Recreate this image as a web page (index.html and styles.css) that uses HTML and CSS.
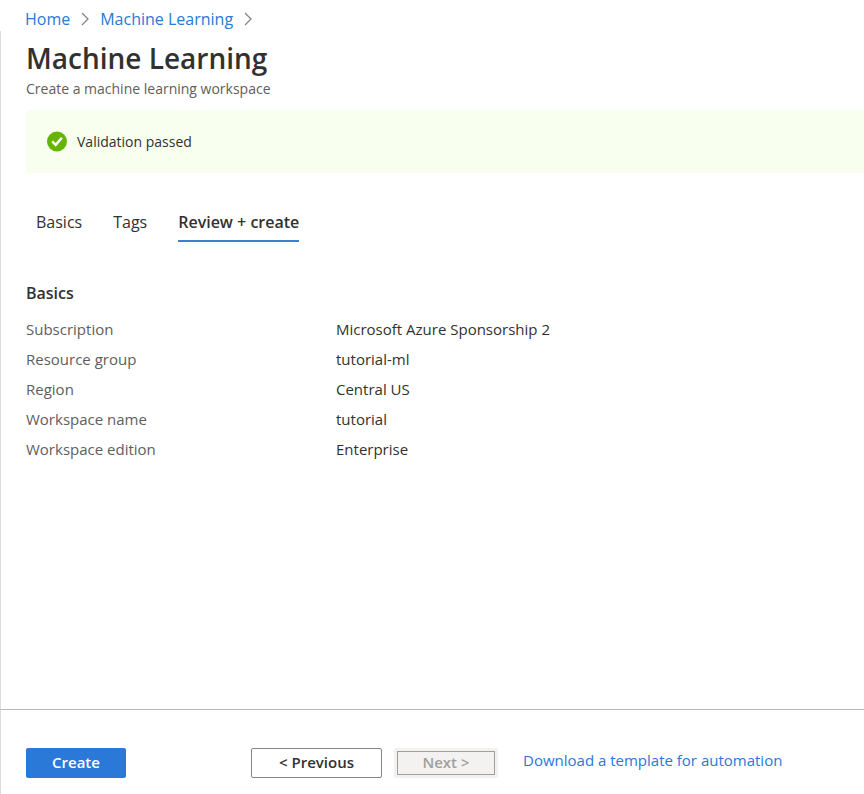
FILE: index.html
```html
<!DOCTYPE html>
<html lang="en">
<head>
<meta charset="utf-8">
<title>Machine Learning</title>
<meta name="viewport" content="width=device-width, initial-scale=1">
<link rel="stylesheet" href="styles.css">
</head>
<body>
<div class="page">
  <nav class="breadcrumb" aria-label="Breadcrumb">
    <a href="#">Home</a>
    <svg class="chevron" viewBox="0 0 8 14" aria-hidden="true"><path d="M1 1l6 6-6 6"/></svg>
    <a href="#">Machine Learning</a>
    <svg class="chevron" viewBox="0 0 8 14" aria-hidden="true"><path d="M1 1l6 6-6 6"/></svg>
  </nav>
  <main class="content">
    <h1 class="title">Machine Learning</h1>
    <p class="subtitle">Create a machine learning workspace</p>
    <div class="banner" role="status">
      <svg class="check" viewBox="0 0 20 20" aria-hidden="true"><circle cx="10" cy="9.5" r="10"/><path d="M5.2 9.3l3.5 3.6L14.8 5.7"/></svg>
      <span>Validation passed</span>
    </div>
    <nav class="tabs" aria-label="Steps">
      <a class="tab" href="#">Basics</a>
      <a class="tab" href="#">Tags</a>
      <a class="tab tab-active" href="#" aria-current="page">Review + create</a>
    </nav>
    <h2 class="section-title">Basics</h2>
    <dl class="details">
      <dt>Subscription</dt><dd>Microsoft Azure Sponsorship 2</dd>
      <dt>Resource group</dt><dd>tutorial-ml</dd>
      <dt>Region</dt><dd>Central US</dd>
      <dt>Workspace name</dt><dd>tutorial</dd>
      <dt>Workspace edition</dt><dd>Enterprise</dd>
    </dl>
  </main>
  <footer class="footer">
    <button class="button button-primary" type="button">Create</button>
    <button class="button button-previous" type="button">&lt; Previous</button>
    <button class="button button-next" type="button" disabled><span class="next-frame">Next &gt;</span></button>
    <a class="download" href="#">Download a template for automation</a>
  </footer>
</div>
</body>
</html>
```
FILE: styles.css
```css
* {
  box-sizing: border-box;
}

body {
  margin: 0;
  background: #fff;
  color: #323130;
  font-family: "Open Sans", "Noto Sans", sans-serif;
  font-size: 15px;
  line-height: 20px;
}

a {
  color: #2a78d7;
  text-decoration: none;
}

.page {
  display: flex;
  flex-direction: column;
  min-height: 100vh;
}

.breadcrumb {
  display: flex;
  align-items: center;
  gap: 11px;
  padding: 7px 25px 0;
  font-size: 16px;
  line-height: 24px;
}

.chevron {
  width: 8px;
  height: 14px;
  fill: none;
  stroke: #858585;
  stroke-width: 1.3;
}

.content {
  flex: 1;
  border-left: 1px solid #dcdcdc;
  padding-left: 25px;
}

.title {
  margin: 7px 0 0;
  font-size: 28px;
  font-weight: 600;
  line-height: 40px;
}

.subtitle {
  margin: 0;
  color: #605e5c;
  font-size: 14px;
  line-height: 22px;
}

.banner {
  display: flex;
  align-items: center;
  gap: 10px;
  min-height: 63px;
  margin-top: 10px;
  padding-left: 21px;
  border-radius: 2px 0 0 2px;
  background: #f8ffef;
  font-size: 14px;
}

.check {
  width: 20px;
  height: 20px;
  overflow: visible;
  fill: #65b400;
}

.check path {
  fill: none;
  stroke: #fff;
  stroke-width: 2.4;
}

.tabs {
  display: flex;
  gap: 31px;
  margin-top: 37px;
  padding-left: 10px;
}

.tab {
  padding-bottom: 6px;
  color: #323130;
  font-size: 16px;
  line-height: 24px;
}

.tab-active {
  border-bottom: 2px solid #3a80d5;
  font-weight: 600;
}

.section-title {
  margin: 40px 0 10px;
  font-size: 16px;
  font-weight: 600;
  line-height: 22px;
}

.details {
  display: grid;
  grid-template-columns: 310px 1fr;
  margin: 0;
  line-height: 30px;
}

.details dt {
  color: #605e5c;
}

.details dd {
  margin: 0;
}

.footer {
  display: flex;
  align-items: center;
  padding: 38px 25px 16px;
  border-top: 1px solid #b8b8b8;
  border-left: 1px solid #dcdcdc;
}

.button {
  height: 30px;
  padding: 0 0 2px;
  border: 0;
  border-radius: 2px;
  color: #323130;
  font: inherit;
  font-weight: 600;
}

.button-primary {
  width: 100px;
  background: #2a78d7;
  color: #fff;
}

.button-previous {
  width: 131px;
  margin-left: 125px;
  border: 1px solid #858482;
  background: #fff;
}

.button-next {
  width: 104px;
  margin-left: 12px;
  padding: 3px;
  background: #f3f2f1;
  color: #a19f9d;
}

.next-frame {
  display: block;
  padding-bottom: 2px;
  border: 1px solid #a19f9d;
  line-height: 20px;
}

.download {
  align-self: flex-start;
  margin-left: 25px;
  line-height: 24px;
}
```
